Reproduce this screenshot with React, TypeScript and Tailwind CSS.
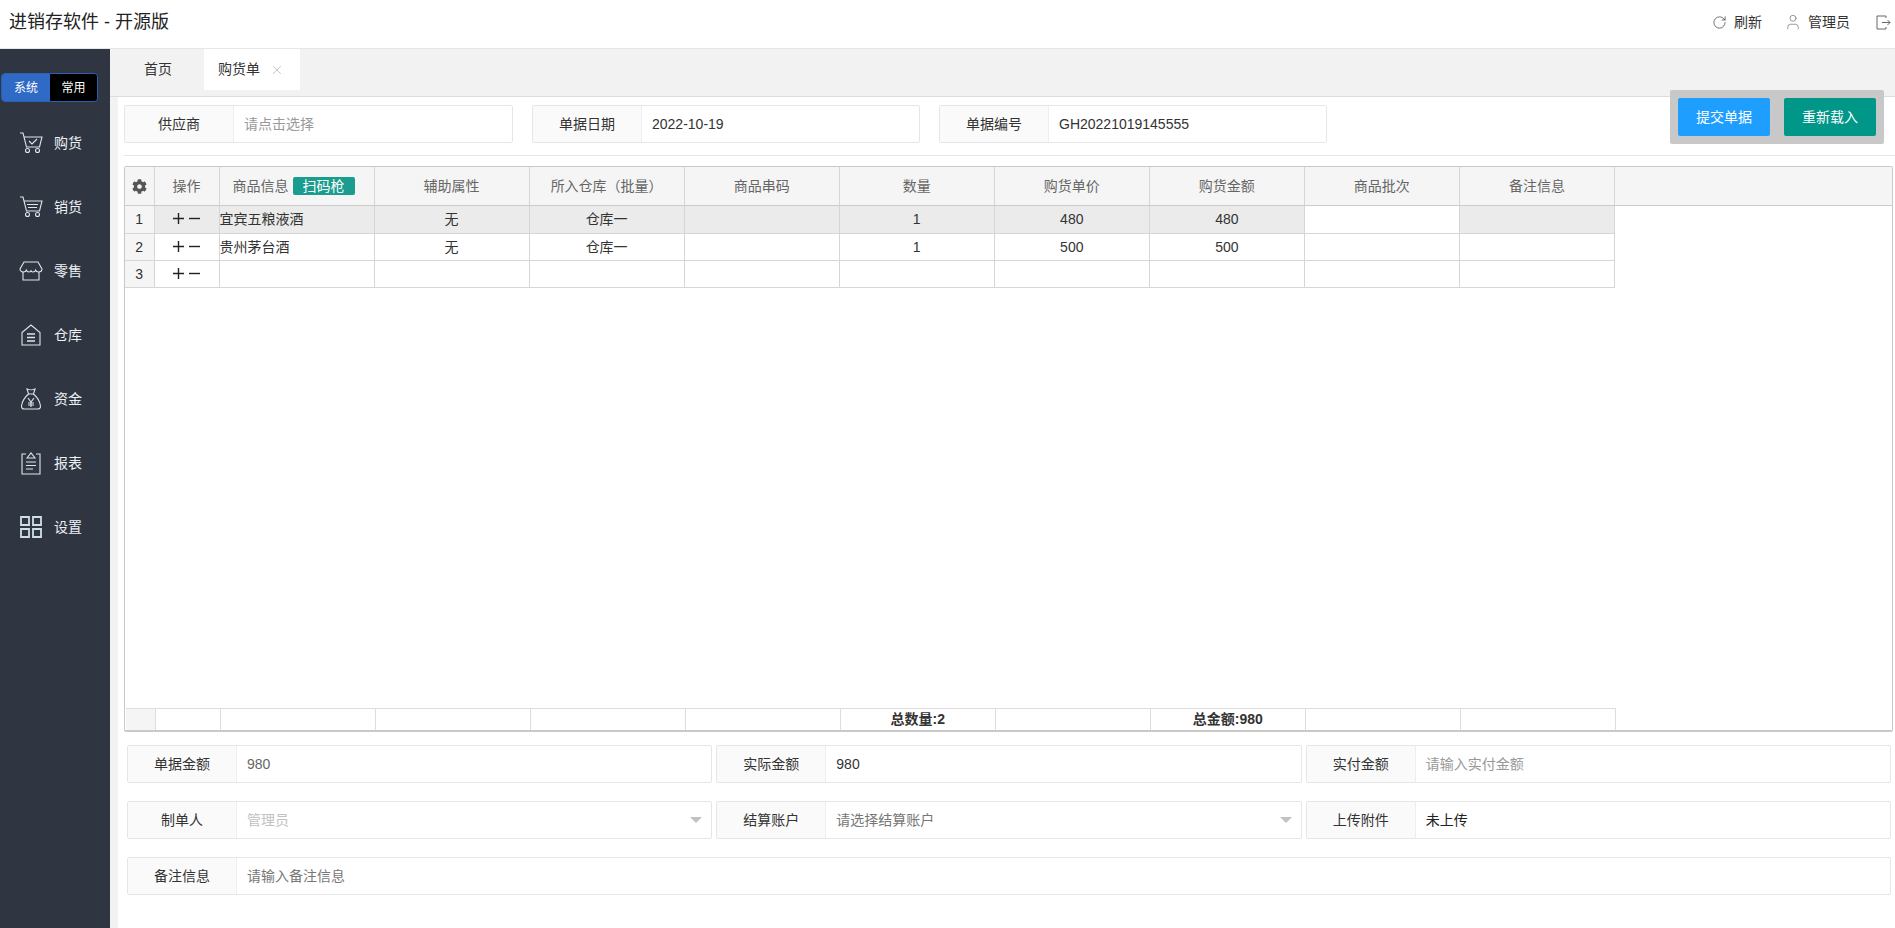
import React from 'react';
import { FaCog } from 'react-icons/fa';
import { RotateCw, User, X } from 'lucide-react';

const navIcon = { width: 24, height: 24, viewBox: '0 0 24 24', fill: 'none', stroke: '#dfe6e8', strokeWidth: 1.1 };

const CartCheck = () => (
    <svg {...navIcon}>
        <path d="M1 2h3l3.5 14h13L23 6H5" />
        <circle cx="8.5" cy="19.5" r="2" />
        <circle cx="18.5" cy="19.5" r="2" />
        <path d="M10 10l3 3 5-5" />
    </svg>
);

const CartList = () => (
    <svg {...navIcon}>
        <path d="M1 2h3l3.5 14h13L23 6H5" />
        <circle cx="8.5" cy="19.5" r="2" />
        <circle cx="18.5" cy="19.5" r="2" />
        <path d="M8 9.5h11M9 12.5h9" />
    </svg>
);

const Store = () => (
    <svg {...navIcon}>
        <path d="M5 3h14l4 7c0 2-2 3-3.6 3-1.200 0-2.400-.7-2.700-1.800-.4 1.100-1.500 1.800-2.700 1.800s-2-.7-2-1.800c0 1.100-1 1.800-2 1.800s-2.300-.7-2.700-1.800C6.900 12.300 5.700 13 4.600 13 3 13 1 12 1 10z" />
        <path d="M4 13v8h16v-8" />
    </svg>
);

const House = () => (
    <svg {...navIcon}>
        <path d="M3 9.500L12 2l9 7.500V22H3z" />
        <path d="M8 11h8M8 14.500h8M8 18h8" strokeWidth="1.500" />
    </svg>
);

const MoneyBag = () => (
    <svg {...navIcon}>
        <path d="M8 2c2 1 6 1 8 0l-1.500 5h-5zM9.500 7C6 10 3 15 2.500 19c-.2 2 1 3 3 3h13c2 0 3.200-1 3-3-.5-4-3.500-9-7-12" />
        <path d="M9 11l3 4 3-4M12 15v5M9 16h6M9 18h6" />
    </svg>
);

const Report = () => (
    <svg {...navIcon}>
        <path d="M7 3H3v20h18V3h-4" />
        <path d="M8 7l4-5 4 5zM7 11h10M7 14.500h10M7 18h7" />
    </svg>
);

const Grid = () => (
    <svg {...navIcon} stroke="#cfe0e4" strokeWidth="1.800">
        <path d="M2 2h8v8H2zM14 2h8v8h-8zM2 14h8v8H2zM14 14h8v8h-8z" />
    </svg>
);

const Logout = () => (
    <svg width="15" height="15" viewBox="0 0 15 15" fill="none" stroke="#666" strokeWidth="1">
        <path d="M10 3V1H1v13h9v-2M6 7.500h8M11.500 5l2.500 2.500-2.500 2.500" />
    </svg>
);

const Plus = () => (
    <svg width="11" height="11" viewBox="0 0 11 11" stroke="#222" strokeWidth="1.400">
        <path d="M0 5.500h11M5.500 0v11" />
    </svg>
);

const Minus = () => (
    <svg width="11" height="11" viewBox="0 0 11 11" stroke="#222" strokeWidth="1.400">
        <path d="M0 5.500h11" />
    </svg>
);

const navItems = [
    { label: '购货', icon: <CartCheck /> },
    { label: '销货', icon: <CartList /> },
    { label: '零售', icon: <Store /> },
    { label: '仓库', icon: <House /> },
    { label: '资金', icon: <MoneyBag /> },
    { label: '报表', icon: <Report /> },
    { label: '设置', icon: <Grid /> },
];

const columns = ['辅助属性', '所入仓库（批量）', '商品串码', '数量', '购货单价', '购货金额', '商品批次', '备注信息'];

const rows = [
    { no: 1, name: '宜宾五粮液酒', attr: '无', depot: '仓库一', qty: '1', price: '480', amount: '480' },
    { no: 2, name: '贵州茅台酒', attr: '无', depot: '仓库一', qty: '1', price: '500', amount: '500' },
    { no: 3, name: '', attr: '', depot: '', qty: '', price: '', amount: '' },
];

const Cols = () => (
    <colgroup>
        <col className="w-[29px]" />
        <col className="w-[65px]" />
        {Array.from({ length: 9 }).map((_, i) => (
            <col key={i} className="w-[155px]" />
        ))}
    </colgroup>
);

const Label: React.FC<{ text: string; width: string }> = ({ text, width }) => (
    <div className={`${width} shrink-0 h-full flex items-center justify-center bg-[#fafafa] border-r border-[#eeeeee] text-[#333]`}>
        {text}
    </div>
);

const Field: React.FC<{
    label: string;
    labelWidth?: string;
    text: string;
    textClass?: string;
    arrow?: boolean;
    className?: string;
}> = ({ label, labelWidth = 'w-[109px]', text, textClass = 'text-[#999]', arrow, className = '' }) => (
    <div className={`h-[38px] flex items-center border border-[#e6e6e6] rounded-[2px] bg-white text-[14px] ${className}`}>
        <Label text={label} width={labelWidth} />
        <div className={`flex-1 px-[10px] ${textClass}`}>{text}</div>
        {arrow && <div className="mr-[9px] w-0 h-0 border-x-[6px] border-x-transparent border-t-[6px] border-t-[#c2c2c2]" />}
    </div>
);

const App: React.FC = () => {
    const headCell = 'h-[38px] border-r border-[#d6d6d6] font-normal text-[#666] text-center';
    const bodyCell = 'h-[27px] border-r border-b border-[#d6d6d6] text-center text-[#333] p-0 pt-px';
    const footCell = 'h-[22px] border-r border-[#dddddd] text-center text-[#333] font-bold p-0';

    return (
        <div className="h-screen flex flex-col overflow-hidden bg-white text-[14px] [font-family:'Liberation_Sans','Noto_Sans_CJK_SC',sans-serif]">
            <header className="h-[49px] shrink-0 flex items-center justify-between pl-[9px] pr-[4px] pb-[4px] border-b border-[#e6e6e6]">
                <div className="text-[18px] text-[#222]">进销存软件 - 开源版</div>
                <div className="flex items-center text-[#333]">
                    <RotateCw size={15} strokeWidth={1.2} color="#444" />
                    <span className="ml-[7px]">刷新</span>
                    <User size={18} strokeWidth={1} color="#777" className="ml-[22px]" />
                    <span className="ml-[6px]">管理员</span>
                    <span className="ml-[26px]"><Logout /></span>
                </div>
            </header>

            <div className="flex-1 flex min-h-0">
                <aside className="w-[110px] shrink-0 bg-[#2f3642] pt-[24px] text-white">
                    <div className="ml-px w-[97px] h-[29px] flex text-[12px] rounded-[4px] overflow-hidden border border-[#2d5fb5] mb-[9px]">
                        <div className="w-[48px] flex items-center justify-center bg-[#2f6ac6]">系统</div>
                        <div className="flex-1 flex items-center justify-center bg-black">常用</div>
                    </div>
                    {navItems.map(item => (
                        <div key={item.label} className="h-[64px] flex items-center pl-[19px] gap-[11px] text-[#eef1f3]">
                            {item.icon}
                            <span>{item.label}</span>
                        </div>
                    ))}
                </aside>

                <main className="flex-1 min-w-0 flex flex-col">
                    <div className="h-[48px] shrink-0 bg-[#f2f2f2] border-b border-[#dddddd] pb-[6px] flex">
                        <div className="w-[92px] ml-[2px] flex items-center justify-center text-[#333]">首页</div>
                        <div className="w-[96px] bg-white flex items-center pl-[14px] text-[#333]">
                            购货单
                            <X size={14} strokeWidth={1} color="#999" className="ml-[10px]" />
                        </div>
                    </div>

                    <div className="flex-1 min-h-0 flex">
                        <div className="w-[8px] shrink-0 bg-[#f2f2f2]" />
                        <div className="flex-1 min-w-0 flex flex-col">
                            <div className="h-[59px] shrink-0 ml-[6px] pt-[8px] flex items-start border-b border-[#e6e6e6]">
                                <Field label="供应商" text="请点击选择" className="w-[389px]" />
                                <Field label="单据日期" text="2022-10-19" textClass="text-[#333]" className="w-[388px] ml-[19px]" />
                                <Field label="单据编号" text="GH20221019145555" textClass="text-[#333]" className="w-[388px] ml-[19px]" />
                                <div className="ml-[343px] -mt-[15px] w-[214px] h-[54px] bg-[#c8c8c8] rounded-[2px] flex justify-center gap-[14px] pt-[8px] relative text-white">
                                    <div className="w-[92px] h-[38px] rounded-[2px] bg-[#1e9fff] flex items-center justify-center">提交单据</div>
                                    <div className="w-[92px] h-[38px] rounded-[2px] bg-[#009688] flex items-center justify-center">重新载入</div>
                                </div>
                            </div>

                            <div className="h-[566px] shrink-0 ml-[6px] mr-[2px] mt-[10px] border border-[#c9c9c9] border-b-2 rounded-[2px] flex flex-col">
                                <div className="bg-[#f5f5f5] border-b border-[#cccccc] shrink-0">
                                    <table className="table-fixed border-collapse w-[1490px]">
                                        <Cols />
                                        <thead>
                                            <tr>
                                                <th className={headCell}>
                                                    <FaCog size={15} color="#555" className="mx-auto" />
                                                </th>
                                                <th className={headCell}>操作</th>
                                                <th className={headCell}>
                                                    <span className="inline-flex items-center gap-[4px] mr-[6px]">
                                                        商品信息
                                                        <span className="h-[18px] w-[62px] rounded-[2px] bg-[#1a9c8e] text-white flex items-center justify-center">扫码枪</span>
                                                    </span>
                                                </th>
                                                {columns.map(c => (
                                                    <th key={c} className={headCell}>{c}</th>
                                                ))}
                                            </tr>
                                        </thead>
                                    </table>
                                </div>

                                <div className="flex-1 min-h-0">
                                    <table className="table-fixed border-collapse w-[1490px]">
                                        <Cols />
                                        <tbody>
                                            {rows.map(row => {
                                                const bg = row.no === 1 ? 'bg-[#ebebeb]' : 'bg-white';
                                                return (
                                                    <tr key={row.no}>
                                                        <td className={`${bodyCell} bg-[#f5f5f5]`}>{row.no}</td>
                                                        <td className={`${bodyCell} ${bg}`}>
                                                            <span className="inline-flex items-center gap-[5px]">
                                                                <Plus />
                                                                <Minus />
                                                            </span>
                                                        </td>
                                                        <td className={`${bodyCell} ${bg} !text-left text-[#222]`}>{row.name}</td>
                                                        <td className={`${bodyCell} ${bg}`}>{row.attr}</td>
                                                        <td className={`${bodyCell} ${bg}`}>{row.depot}</td>
                                                        <td className={`${bodyCell} ${bg}`}></td>
                                                        <td className={`${bodyCell} ${bg}`}>{row.qty}</td>
                                                        <td className={`${bodyCell} ${bg}`}>{row.price}</td>
                                                        <td className={`${bodyCell} ${bg}`}>{row.amount}</td>
                                                        <td className={`${bodyCell} bg-white`}></td>
                                                        <td className={`${bodyCell} ${bg}`}></td>
                                                    </tr>
                                                );
                                            })}
                                        </tbody>
                                    </table>
                                </div>

                                <div className="shrink-0 pl-px">
                                    <table className="table-fixed border-collapse w-[1490px] border-t border-[#dddddd]">
                                        <Cols />
                                        <tbody>
                                            <tr>
                                                <td className={`${footCell} bg-[#f5f5f5]`}></td>
                                                <td className={footCell}></td>
                                                <td className={footCell}></td>
                                                <td className={footCell}></td>
                                                <td className={footCell}></td>
                                                <td className={footCell}></td>
                                                <td className={footCell}>总数量:2</td>
                                                <td className={footCell}></td>
                                                <td className={footCell}>总金额:980</td>
                                                <td className={footCell}></td>
                                                <td className={footCell}></td>
                                            </tr>
                                        </tbody>
                                    </table>
                                </div>
                            </div>

                            <div className="ml-[9px] mr-[4px] mt-[13px] flex flex-col gap-[18px]">
                                <div className="flex gap-[4px]">
                                    <Field label="单据金额" text="980" textClass="text-[#666]" className="flex-1" />
                                    <Field label="实际金额" text="980" textClass="text-[#333]" className="flex-1" />
                                    <Field label="实付金额" text="请输入实付金额" className="flex-1" />
                                </div>
                                <div className="flex gap-[4px]">
                                    <Field label="制单人" text="管理员" textClass="text-[#c2c2c2]" arrow className="flex-1" />
                                    <Field label="结算账户" text="请选择结算账户" textClass="text-[#777]" arrow className="flex-1" />
                                    <Field label="上传附件" text="未上传" textClass="text-[#222]" className="flex-1" />
                                </div>
                                <Field label="备注信息" text="请输入备注信息" textClass="text-[#777]" />
                            </div>
                        </div>
                    </div>
                </main>
            </div>
        </div>
    );
};

export default App;
